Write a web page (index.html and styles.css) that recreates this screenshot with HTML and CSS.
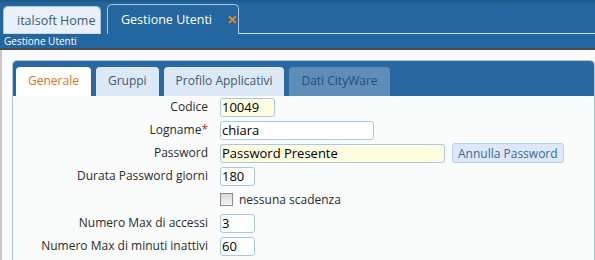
FILE: index.html
```html
<!DOCTYPE html>
<html lang="it">
<head>
    <meta charset="UTF-8">
    <title>Gestione Utenti</title>
    <link rel="stylesheet" href="styles.css">
</head>
<body>
    <div class="topbar">
        <div class="main-tab home-tab">italsoft Home</div>
        <div class="main-tab active-tab">Gestione Utenti <span class="close">&#x2715;</span></div>
        <div class="tab-fill"></div>
    </div>
    <div class="subbar">Gestione Utenti</div>

    <div class="content">
        <div class="panel">
            <div class="panel-tabs">
                <div class="ptab selected">Generale</div>
                <div class="ptab">Gruppi</div>
                <div class="ptab">Profilo Applicativi</div>
                <div class="ptab disabled">Dati CityWare</div>
            </div>

            <div class="form">
                <label>Codice</label>
                <div class="field"><input class="inp w-codice readonly" value="10049"></div>

                <label>Logname<span class="req">*</span></label>
                <div class="field"><input class="inp w-logname" value="chiara"></div>

                <label>Password</label>
                <div class="field">
                    <input class="inp w-password readonly" value="Password Presente">
                    <button class="btn">Annulla Password</button>
                </div>

                <label>Durata Password giorni</label>
                <div class="field"><input class="inp w-small" value="180"></div>

                <label></label>
                <div class="field check-row"><span class="checkbox"></span>nessuna scadenza</div>

                <label class="spaced">Numero Max di accessi</label>
                <div class="field spaced"><input class="inp w-small" value="3"></div>

                <label>Numero Max di minuti inattivi</label>
                <div class="field"><input class="inp w-small" value="60"></div>
            </div>
        </div>
    </div>
</body>
</html>
```

FILE: styles.css
```css
* {
    margin: 0;
    padding: 0;
    box-sizing: border-box;
}

body {
    font-family: "Open Sans", Arial, sans-serif;
    background-color: #fafcfc;
    height: 260px;
    overflow: hidden;
}

.topbar {
    height: 34px;
    background: linear-gradient(#1d5787 0, #24669f 4px, #24669f 100%);
    display: flex;
    align-items: flex-end;
    padding-left: 3px;
}

.main-tab {
    font-size: 12.5px;
    white-space: nowrap;
    border: 1px solid #a9c4de;
    border-bottom: none;
    border-radius: 5px 5px 0 0;
    display: flex;
    align-items: center;
}

.home-tab {
    width: 98px;
    height: 28px;
    background-color: #e8f0fb;
    color: #3e5a75;
    padding-left: 13px;
    border-bottom: 1px solid #c9dbec;
}

.active-tab {
    width: 132px;
    height: 30px;
    margin-left: 6px;
    background-color: #24669f;
    color: #fff;
    padding-left: 13px;
}

.close {
    color: #f08a24;
    font-size: 12px;
    font-weight: bold;
    margin-left: 15px;
}

.tab-fill {
    flex: 1;
    height: 1px;
    background-color: #c9dbec;
}

.subbar {
    height: 16px;
    background-color: #2267a2;
    color: #fff;
    font-size: 10px;
    line-height: 14px;
    padding-left: 4px;
    border-bottom: 2px solid #4a4a4a;
}

.content {
    border-left: 2px solid #c9c9c9;
    height: 210px;
    padding: 10px 0 0 10px;
}

.panel {
    border: 1px solid #a8c6e0;
    border-bottom: none;
    border-radius: 5px 5px 0 0;
    height: 200px;
}

.panel-tabs {
    background-color: #2a68a2;
    border-radius: 4px 4px 0 0;
    height: 35px;
    display: flex;
    align-items: flex-end;
    gap: 5px;
    padding-left: 3px;
}

.ptab {
    height: 29px;
    font-size: 12px;
    white-space: nowrap;
    color: #3f5a74;
    background-color: #dde8f7;
    border-radius: 4px 4px 0 0;
    padding: 0 12px;
    line-height: 28px;
}

.ptab.selected {
    background-color: #fff;
    color: #e26f1c;
}

.ptab.disabled {
    background-color: #5e8dba;
    color: #244f7a;
}

.form {
    display: grid;
    grid-template-columns: 195px 1fr;
    column-gap: 12px;
    row-gap: 5px;
    padding-top: 2px;
    font-size: 12px;
    color: #2b2b2b;
}

.form label {
    text-align: right;
    line-height: 18px;
}

.req {
    color: #d22;
}

.field {
    display: flex;
    align-items: center;
    height: 18px;
}

.spaced {
    margin-top: 1px;
}

.inp {
    font-family: "Open Sans", Arial, sans-serif;
    font-size: 13px;
    color: #000;
    height: 19px;
    border: 1px solid #a9c8e6;
    border-radius: 3px;
    padding: 0 1px;
    background-color: #fff;
}

.readonly {
    background-color: #fffde0;
}

.w-codice { width: 55px; }
.w-logname { width: 154px; }
.w-password { width: 225px; }
.w-small { width: 35px; }

.btn {
    font-family: "Open Sans", Arial, sans-serif;
    font-size: 12px;
    color: #3c6a96;
    background-color: #dce8fa;
    border: 1px solid #b8d0ea;
    border-radius: 3px;
    height: 20px;
    padding: 0 5px;
    margin-left: 7px;
}

.check-row {
    gap: 6px;
}

.checkbox {
    width: 13px;
    height: 13px;
    border: 1px solid #8c8c8c;
    background: linear-gradient(#d8d8d8, #f4f4f4);
}
```
